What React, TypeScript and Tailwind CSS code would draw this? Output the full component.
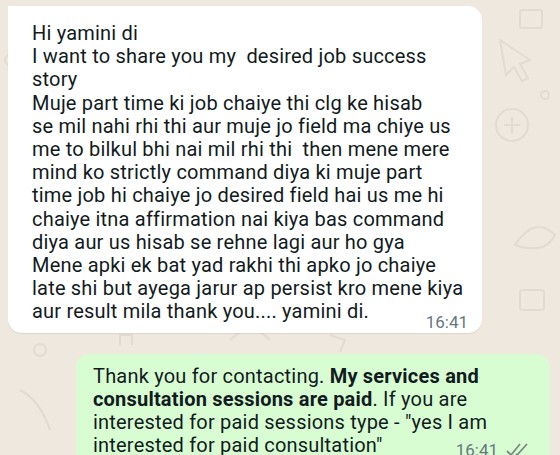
const incoming = [
  "Hi yamini di",
  "I want to share you my  desired job success",
  "story",
  "Muje part time ki job chaiye thi clg ke hisab",
  "se mil nahi rhi thi aur muje jo field ma chiye us",
  "me to bilkul bhi nai mil rhi thi  then mene mere",
  "mind ko strictly command diya ki muje part",
  "time job hi chaiye jo desired field hai us me hi",
  "chaiye itna affirmation nai kiya bas command",
  "diya aur us hisab se rehne lagi aur ho gya",
  "Mene apki ek bat yad rakhi thi apko jo chaiye",
  "late shi but ayega jarur ap persist kro mene kiya",
  "aur result mila thank you.... yamini di.",
];

function Doodles() {
  return (
    <svg
      className="absolute inset-0"
      width="560"
      height="455"
      viewBox="0 0 560 455"
      fill="none"
      stroke="#e3dbd0"
      strokeWidth="2"
    >
      <path d="M500 40 l30 20 l-10 4 l8 14 l-6 3 l-8 -14 l-8 8 z" />
      <rect x="520" y="10" width="22" height="18" rx="2" />
      <circle cx="512" cy="125" r="16" />
      <path d="M504 125 h16 M512 117 v16" />
      <circle cx="545" cy="95" r="4" />
      <path d="M515 245 q20 -30 40 -10 q-10 20 -40 10 z" />
      <rect x="520" y="290" width="24" height="20" rx="3" />
      <path d="M10 150 q15 -10 20 10 q-5 15 -20 5 z" />
      <circle cx="14" cy="260" r="4" />
      <path d="M20 390 q20 10 30 40" />
      <circle cx="40" cy="350" r="6" />
      <path d="M120 345 v-10 h12 v10" />
      <path d="M230 340 q20 -20 40 0" />
      <path d="M330 335 l15 5 l-5 12" />
      <circle cx="10" cy="60" r="5" />
    </svg>
  );
}

export default function App() {
  return (
    <div
      className="relative h-[455px] w-[560px] overflow-hidden bg-[#efe8df] text-[#111b21]"
      style={{ fontFamily: "Roboto, 'Noto Sans', sans-serif" }}
    >
      <Doodles />
      <div className="relative flex flex-col pt-[6px]">
        {/* incoming */}
        <div className="relative ml-[8px] w-[474px] rounded-[14px] rounded-tl-none bg-white pb-[9px] pl-[24px] pr-[6px] pt-[16px] shadow-[0_1px_1px_rgba(0,0,0,0.08)]">
          {incoming.map((line, i) => (
            <div key={i} className="whitespace-pre text-[20px] leading-[23.2px] tracking-[0.2px]">
              {line}
            </div>
          ))}
          <span className="absolute bottom-[2px] right-[14px] text-[17px] leading-[18px] text-[#667781]">
            16:41
          </span>
        </div>

        {/* outgoing */}
        <div className="relative ml-[76px] mt-[21px] w-[474px] rounded-[14px] bg-[#d9fdd3] pb-[20px] pl-[17px] pr-[6px] pt-[11px]">
          <div className="text-[20px] leading-[23.2px] tracking-[0.2px]">
            <div className="whitespace-pre">
              Thank you for contacting. <b className="font-bold">My services and</b>
            </div>
            <div className="whitespace-pre">
              <b className="font-bold">consultation sessions are paid</b>. If you are
            </div>
            <div className="whitespace-pre">interested for paid sessions type - "yes I am</div>
            <div className="whitespace-pre">interested for paid consultation"</div>
          </div>
          <div className="absolute right-[20px] top-[86px] flex items-center gap-[8px] text-[#667781]">
            <span className="text-[17px] leading-[20px]">16:41</span>
            <svg width="24" height="14" viewBox="0 0 24 14" fill="none" stroke="#7a8a80" strokeWidth="1.8">
              <path d="M1 8 l4 4 l9 -11" />
              <path d="M10 11 l1 1 l10 -11" />
            </svg>
          </div>
        </div>
      </div>
    </div>
  );
}
